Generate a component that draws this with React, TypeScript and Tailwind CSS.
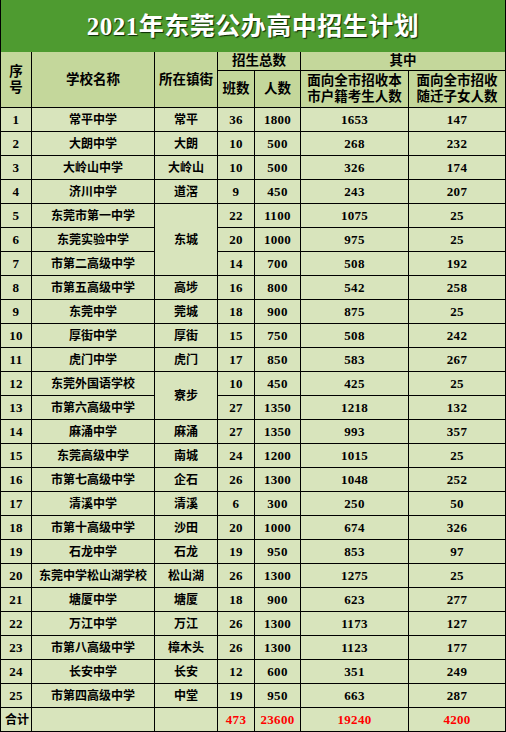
import React from "react";

type Row = [number, string, string | null, number, number, number, number, number?];

const rows: Row[] = [
  [1, "常平中学", "常平", 36, 1800, 1653, 147],
  [2, "大朗中学", "大朗", 10, 500, 268, 232],
  [3, "大岭山中学", "大岭山", 10, 500, 326, 174],
  [4, "济川中学", "道滘", 9, 450, 243, 207],
  [5, "东莞市第一中学", "东城", 22, 1100, 1075, 25, 3],
  [6, "东莞实验中学", null, 20, 1000, 975, 25],
  [7, "市第二高级中学", null, 14, 700, 508, 192],
  [8, "市第五高级中学", "高埗", 16, 800, 542, 258],
  [9, "东莞中学", "莞城", 18, 900, 875, 25],
  [10, "厚街中学", "厚街", 15, 750, 508, 242],
  [11, "虎门中学", "虎门", 17, 850, 583, 267],
  [12, "东莞外国语学校", "寮步", 10, 450, 425, 25, 2],
  [13, "市第六高级中学", null, 27, 1350, 1218, 132],
  [14, "麻涌中学", "麻涌", 27, 1350, 993, 357],
  [15, "东莞高级中学", "南城", 24, 1200, 1015, 25],
  [16, "市第七高级中学", "企石", 26, 1300, 1048, 252],
  [17, "清溪中学", "清溪", 6, 300, 250, 50],
  [18, "市第十高级中学", "沙田", 20, 1000, 674, 326],
  [19, "石龙中学", "石龙", 19, 950, 853, 97],
  [20, "东莞中学松山湖学校", "松山湖", 26, 1300, 1275, 25],
  [21, "塘厦中学", "塘厦", 18, 900, 623, 277],
  [22, "万江中学", "万江", 26, 1300, 1173, 127],
  [23, "市第八高级中学", "樟木头", 26, 1300, 1123, 177],
  [24, "长安中学", "长安", 12, 600, 351, 249],
  [25, "市第四高级中学", "中堂", 19, 950, 663, 287],
];

const font = { fontFamily: '"Liberation Serif", "Noto Sans CJK SC", serif' };

const hd = "bg-[#c4d79b] flex items-center justify-center text-center text-[13.5px] leading-[16px] font-bold text-black";
const cell = "bg-[#d8e4bc] flex items-center justify-center text-center font-bold text-black";
const num = "text-[13px] tracking-[0.3px]";
const cjk = "text-[12px]";

export default function App() {
  return (
    <div className="w-[506px] h-[732px] bg-white" style={font}>
      <div className="h-[52px] bg-[#4e9b30] border-l border-r border-black flex items-center justify-center">
        <span className="text-white font-bold text-[25px] tracking-[0.5px] leading-none [text-shadow:1px_1px_1px_#0b2a05]">
          2021年东莞公办高中招生计划
        </span>
      </div>
      <div className="grid grid-cols-[30px_122px_62px_36px_45px_107px_96px] grid-rows-[18px_36px_repeat(26,23px)] gap-px bg-black px-px pb-px">
        <div className={`${hd} row-span-2`}>
          序<br />号
        </div>
        <div className={`${hd} row-span-2`}>学校名称</div>
        <div className={`${hd} row-span-2`}>所在镇街</div>
        <div className={`${hd} col-span-2`}>招生总数</div>
        <div className={`${hd} col-span-2`}>其中</div>
        <div className={hd}>班数</div>
        <div className={hd}>人数</div>
        <div className={hd}>
          面向全市招收本
          <br />
          市户籍考生人数
        </div>
        <div className={hd}>
          面向全市招收
          <br />
          随迁子女人数
        </div>
        {rows.map((r) => {
          const [n, name, town, cls, ppl, a, b, span] = r;
          return (
            <React.Fragment key={n}>
              <div className={`${cell} ${num}`}>{n}</div>
              <div className={`${cell} ${cjk}`}>{name}</div>
              {town !== null &&
                (span === 3 ? (
                  <div className={`${cell} ${cjk} row-span-3`}>{town}</div>
                ) : span === 2 ? (
                  <div className={`${cell} ${cjk} row-span-2`}>{town}</div>
                ) : (
                  <div className={`${cell} ${cjk}`}>{town}</div>
                ))}
              <div className={`${cell} ${num}`}>{cls}</div>
              <div className={`${cell} ${num}`}>{ppl}</div>
              <div className={`${cell} ${num}`}>{a}</div>
              <div className={`${cell} ${num}`}>{b}</div>
            </React.Fragment>
          );
        })}
        <div className={`${cell} ${cjk} !justify-start pl-1`}>合计</div>
        <div className={cell}></div>
        <div className={cell}></div>
        <div className={`${cell} ${num} !text-[#ff0000]`}>473</div>
        <div className={`${cell} ${num} !text-[#ff0000]`}>23600</div>
        <div className={`${cell} ${num} !text-[#ff0000]`}>19240</div>
        <div className={`${cell} ${num} !text-[#ff0000]`}>4200</div>
      </div>
    </div>
  );
}
